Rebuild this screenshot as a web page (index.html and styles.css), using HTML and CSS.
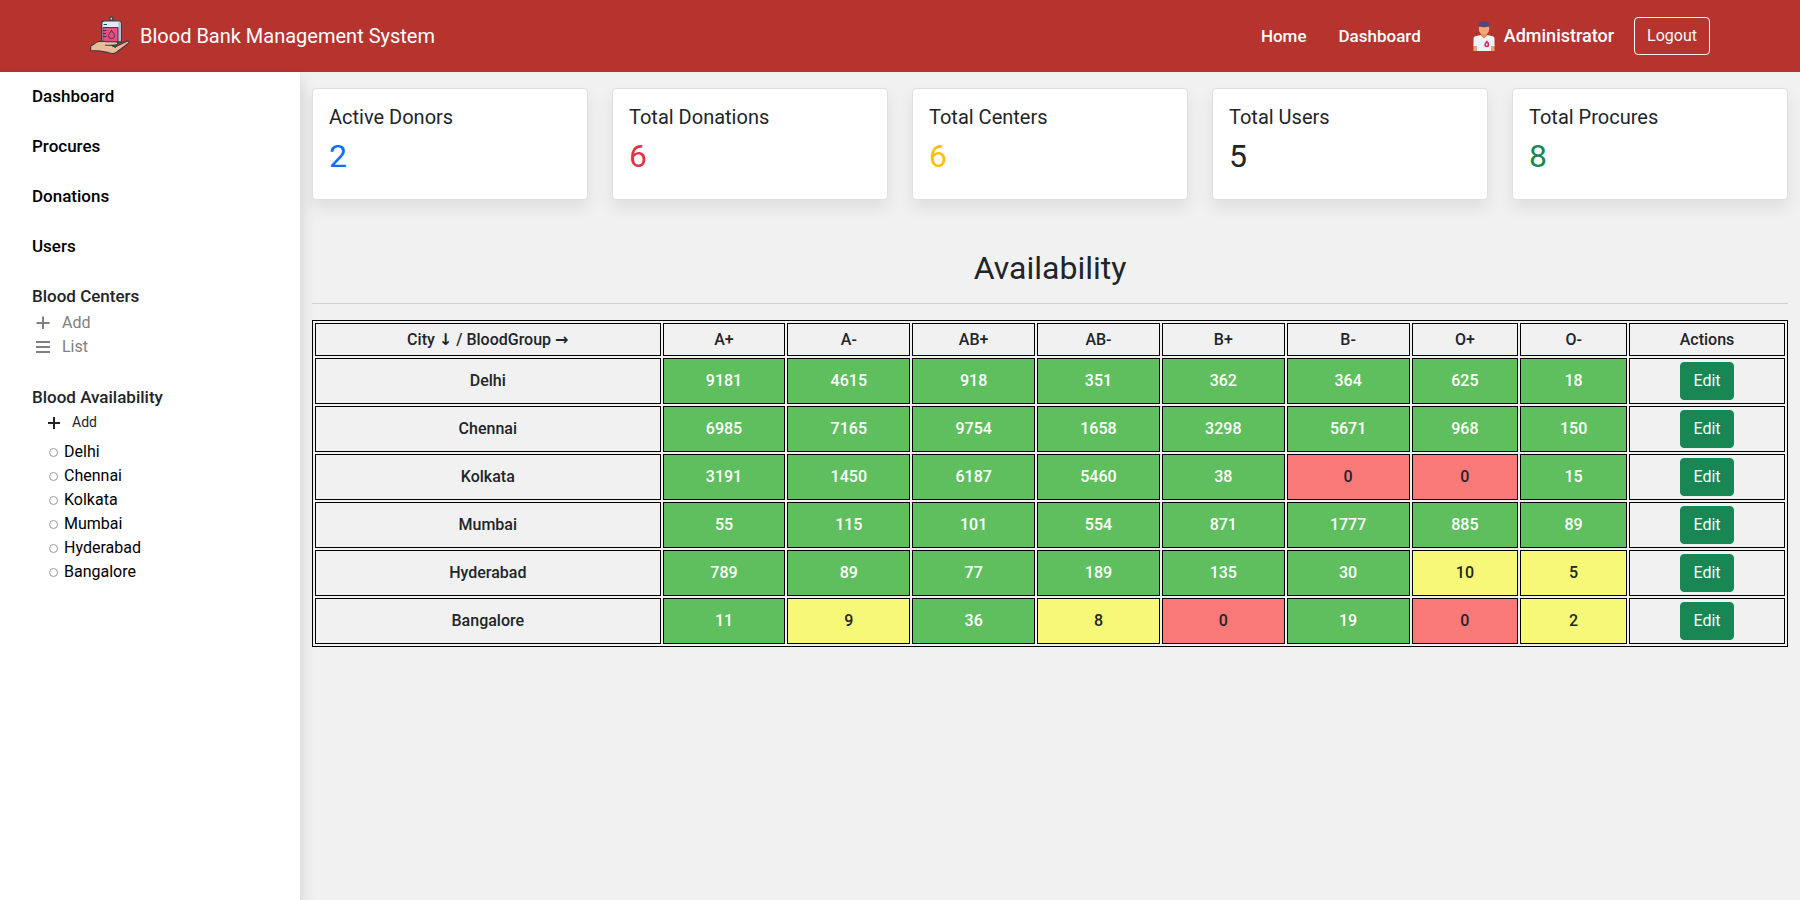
FILE: index.html
```html
<!DOCTYPE html>
<html lang="en">
<head>
<meta charset="utf-8">
<title>Blood Bank Management System</title>
<meta name="viewport" content="width=device-width, initial-scale=1">
<link rel="stylesheet" href="styles.css">
</head>
<body>
<header class="navbar">
  <a class="brand" href="#">
    <svg class="brand-logo" viewBox="0 0 40 40" aria-hidden="true">
      <g stroke="#3b3a40" stroke-width="1.3" stroke-linejoin="round" stroke-linecap="round">
        <circle cx="21.300" cy="2.600" r="1.700" fill="#a9d3ee"/>
        <path d="M14.500 4.800h14a2.800 2.800 0 0 1 2.800 2.800V26h-19.600V7.600a2.800 2.800 0 0 1 2.800-2.800z" fill="#dcebf7"/>
        <path d="M28.300 5.500h1a2 2 0 0 1 1.600 2V25h-2.600z" fill="#a9bfdb" stroke="none"/>
        <path d="M13.500 11.500h14.500V26H13.500z" fill="#e84c82" stroke-width="1"/>
        <path d="M13.500 14.500h2.500M13.500 17.500h2M13.500 20.500h2.500M14 8.500h2.600" fill="none" stroke-width="1"/>
        <path d="M21.500 14.500c1.400 2 2.900 3.600 2.900 5.300a2.900 2.900 0 0 1-5.800 0c0-1.700 1.500-3.300 2.900-5.300z" fill="#e84c82" stroke-width="1"/>
        <path d="M.700 30c3-1.200 4.400-3.700 8-4.500 3-.4 5.300 0 8 .200h8.800c2.600.1 3.100 2.700.8 3.200l-4.800.4 3.500 1.800 11.500-5.600c2-1 3.300.4 2 1.600l-12.700 9.600c-2.600 1.700-5.200.7-8.300-.300L8.500 34.700H.700z" fill="#eabb9b" stroke-width="1.100"/>
        <path d="M15.500 29.200l6 .2 4 1.900" fill="none" stroke-width="1"/>
      </g>
    </svg>
    <span>Blood Bank Management System</span>
  </a>
  <nav class="nav-links">
    <a class="nav-link" href="#">Home</a>
    <a class="nav-link" href="#">Dashboard</a>
    <div class="account">
      <svg class="avatar" viewBox="0 0 22 30" aria-hidden="true">
        <path d="M.500 24L4 24V30H.500zM18 24h3.500v6H18z" fill="#f0a06c"/>
        <path d="M.500 25V18q0-2.700 2.700-3L8 14h6l4.800 1q2.700.300 2.700 3v7H18v5H4v-5z" fill="#ecf4fb"/>
        <path d="M8 11h6v4l-3 2.500L8 15z" fill="#e28f5e"/>
        <path d="M5.800 5h10.400v3.500q-.7 4.800-5.200 5.300Q6.500 13.300 5.800 8.500z" fill="#f3a776"/>
        <path d="M5.200 7.500Q4.500.200 11 .200T16.800 7.500L15.500 5.500Q11 7 6.500 5.500z" fill="#554679"/>
        <path d="M13.800 19.200q2.500 2.700 2.500 4.600a2.500 2.500 0 0 1-5 0q0-1.900 2.500-4.600z" fill="#e32858"/>
        <path d="M13.100 22.600h1.400v1.800h-1.400z" fill="#fff"/>
      </svg>
      <span>Administrator</span>
    </div>
    <button class="logout" type="button">Logout</button>
  </nav>
</header>

<div class="layout">
  <aside class="sidebar">
    <a class="side-link" href="#">Dashboard</a>
    <a class="side-link" href="#">Procures</a>
    <a class="side-link" href="#">Donations</a>
    <a class="side-link" href="#">Users</a>
    <section class="side-group">
      <div class="side-title">Blood Centers</div>
      <a class="center-link" href="#"><svg class="icon" viewBox="0 0 14 14" aria-hidden="true"><path d="M7 .500v12.500M.500 7h13"/></svg>Add</a>
      <a class="center-link" href="#"><svg class="icon" viewBox="0 0 14 14" aria-hidden="true"><path d="M0 2h14M0 7h14M0 12h14"/></svg>List</a>
    </section>
    <section class="side-group">
      <div class="side-title">Blood Availability</div>
      <a class="add-link" href="#"><svg class="icon icon-small" viewBox="0 0 12 12" aria-hidden="true"><path d="M6 0v12M0 6h12"/></svg>Add</a>
      <ul class="cities">
        <li><a href="#">Delhi</a></li>
        <li><a href="#">Chennai</a></li>
        <li><a href="#">Kolkata</a></li>
        <li><a href="#">Mumbai</a></li>
        <li><a href="#">Hyderabad</a></li>
        <li><a href="#">Bangalore</a></li>
      </ul>
    </section>
  </aside>

  <main class="content">
    <div class="cards">
      <section class="card"><h2 class="card-title">Active Donors</h2><p class="card-value blue">2</p></section>
      <section class="card"><h2 class="card-title">Total Donations</h2><p class="card-value red">6</p></section>
      <section class="card"><h2 class="card-title">Total Centers</h2><p class="card-value amber">6</p></section>
      <section class="card"><h2 class="card-title">Total Users</h2><p class="card-value">5</p></section>
      <section class="card"><h2 class="card-title">Total Procures</h2><p class="card-value teal">8</p></section>
    </div>

    <h1 class="heading">Availability</h1>
    <table class="stock">
      <colgroup><col class="col-city"><col class="col-wide" span="6"><col class="col-narrow" span="2"><col></colgroup>
      <thead>
        <tr><th>City <span class="arrow">↓</span> / BloodGroup <span class="arrow">→</span></th><th>A+</th><th>A-</th><th>AB+</th><th>AB-</th><th>B+</th><th>B-</th><th>O+</th><th>O-</th><th>Actions</th></tr>
      </thead>
      <tbody>
        <tr><td>Delhi</td><td class="ok">9181</td><td class="ok">4615</td><td class="ok">918</td><td class="ok">351</td><td class="ok">362</td><td class="ok">364</td><td class="ok">625</td><td class="ok">18</td><td><button class="edit" type="button">Edit</button></td></tr>
        <tr><td>Chennai</td><td class="ok">6985</td><td class="ok">7165</td><td class="ok">9754</td><td class="ok">1658</td><td class="ok">3298</td><td class="ok">5671</td><td class="ok">968</td><td class="ok">150</td><td><button class="edit" type="button">Edit</button></td></tr>
        <tr><td>Kolkata</td><td class="ok">3191</td><td class="ok">1450</td><td class="ok">6187</td><td class="ok">5460</td><td class="ok">38</td><td class="empty">0</td><td class="empty">0</td><td class="ok">15</td><td><button class="edit" type="button">Edit</button></td></tr>
        <tr><td>Mumbai</td><td class="ok">55</td><td class="ok">115</td><td class="ok">101</td><td class="ok">554</td><td class="ok">871</td><td class="ok">1777</td><td class="ok">885</td><td class="ok">89</td><td><button class="edit" type="button">Edit</button></td></tr>
        <tr><td>Hyderabad</td><td class="ok">789</td><td class="ok">89</td><td class="ok">77</td><td class="ok">189</td><td class="ok">135</td><td class="ok">30</td><td class="low">10</td><td class="low">5</td><td><button class="edit" type="button">Edit</button></td></tr>
        <tr><td>Bangalore</td><td class="ok">11</td><td class="low">9</td><td class="ok">36</td><td class="low">8</td><td class="empty">0</td><td class="ok">19</td><td class="empty">0</td><td class="low">2</td><td><button class="edit" type="button">Edit</button></td></tr>
      </tbody>
    </table>
  </main>
</div>
</body>
</html>
```

FILE: styles.css
```css
* {
  box-sizing: border-box;
}

body {
  margin: 0;
  min-height: 100vh;
  display: flex;
  flex-direction: column;
  background: #f1f1f1;
  color: #212529;
  font-family: Roboto, "Liberation Sans", sans-serif;
  font-size: 16px;
  line-height: 24px;
}

a {
  color: inherit;
  text-decoration: none;
}

button {
  font: inherit;
  cursor: pointer;
}

.navbar {
  display: flex;
  align-items: center;
  justify-content: space-between;
  padding: 16px 5%;
  background: #b6332e;
  color: #fff;
}

.brand {
  display: flex;
  align-items: center;
  gap: 10px;
  font-size: 20px;
}

.brand-logo {
  width: 40px;
  height: 40px;
}

.nav-links {
  display: flex;
  align-items: center;
  font-weight: 500;
}

.nav-link {
  margin-right: 32px;
  font-size: 17px;
}

.account {
  display: flex;
  align-items: center;
  gap: 9px;
  margin: 0 20px;
  font-size: 18px;
}

.avatar {
  width: 22px;
  height: 30px;
}

.logout {
  padding: 6px 12px;
  border: 1px solid #f8f9fa;
  border-radius: 4px;
  background: transparent;
  color: #f8f9fa;
  font-size: 16px;
  font-weight: 400;
}

.layout {
  flex: 1;
  display: flex;
}

.sidebar {
  flex: 0 0 300px;
  display: flex;
  flex-direction: column;
  gap: 26px;
  padding: 12px 32px;
  background: #fff;
  box-shadow: 0 8px 16px rgba(0, 0, 0, 0.15);
}

.side-link {
  color: #000;
  font-size: 17px;
  font-weight: 500;
}

.side-title {
  margin-bottom: 3px;
  font-size: 17px;
  font-weight: 500;
}

.icon {
  width: 14px;
  height: 14px;
  fill: none;
  stroke: currentColor;
  stroke-width: 2;
}

.icon-small {
  width: 12px;
  height: 12px;
}

.center-link {
  display: flex;
  align-items: center;
  gap: 12px;
  padding-left: 4px;
  color: #808080;
}

.add-link {
  display: flex;
  align-items: center;
  gap: 12px;
  padding-left: 16px;
  font-size: 14px;
  line-height: 21px;
}

.cities {
  margin: 7px 0 0;
  padding: 0 0 0 16px;
  list-style: none;
  color: #000;
}

.cities li {
  display: flex;
  align-items: center;
  gap: 6px;
}

.cities li::before {
  content: "";
  width: 7px;
  height: 7px;
  margin-left: 1px;
  border: 1px solid #999;
  border-radius: 50%;
}

.content {
  flex: 1;
  min-width: 0;
  padding: 16px 12px;
}

.cards {
  display: grid;
  grid-template-columns: repeat(5, 1fr);
  gap: 24px;
}

.card {
  padding: 16px;
  border: 1px solid #dfdfdf;
  border-radius: 4px;
  background: #fff;
  box-shadow: 0 8px 16px rgba(0, 0, 0, 0.08);
}

.card-title {
  margin: 0 0 8px;
  font-size: 20px;
  font-weight: 400;
  line-height: 24px;
}

.card-value {
  margin: 0 0 8px;
  font-size: 32px;
  line-height: 38px;
}

.blue {
  color: #0d6efd;
}

.red {
  color: #dc3545;
}

.amber {
  color: #ffc107;
}

.teal {
  color: #198754;
}

.heading {
  margin: 48px 0 16px;
  padding-bottom: 15px;
  border-bottom: 1px solid #d2d3d3;
  font-size: 32px;
  font-weight: 400;
  line-height: 40px;
  text-align: center;
}

.stock {
  width: 100%;
  table-layout: fixed;
  border: 1px solid #000;
  border-spacing: 2px;
  text-align: center;
  font-weight: 500;
}

.col-city {
  width: 23.8%;
}

.col-wide {
  width: 8.46%;
}

.col-narrow {
  width: 7.35%;
}

.stock th,
.stock td {
  padding: 3px;
  border: 1px solid #000;
  font-weight: 500;
}

.stock th {
  padding-top: 4px;
}

.arrow {
  font-family: "DejaVu Sans", sans-serif;
  font-weight: 700;
}

.ok {
  background: #5fbf5f;
  color: #fff;
}

.low {
  background: #f8f878;
}

.empty {
  background: #f97878;
}

.edit {
  display: block;
  margin: 0 auto;
  padding: 6px 12px;
  border: 1px solid #198754;
  border-radius: 4px;
  background: #198754;
  color: #fff;
  font-weight: 400;
}
```
